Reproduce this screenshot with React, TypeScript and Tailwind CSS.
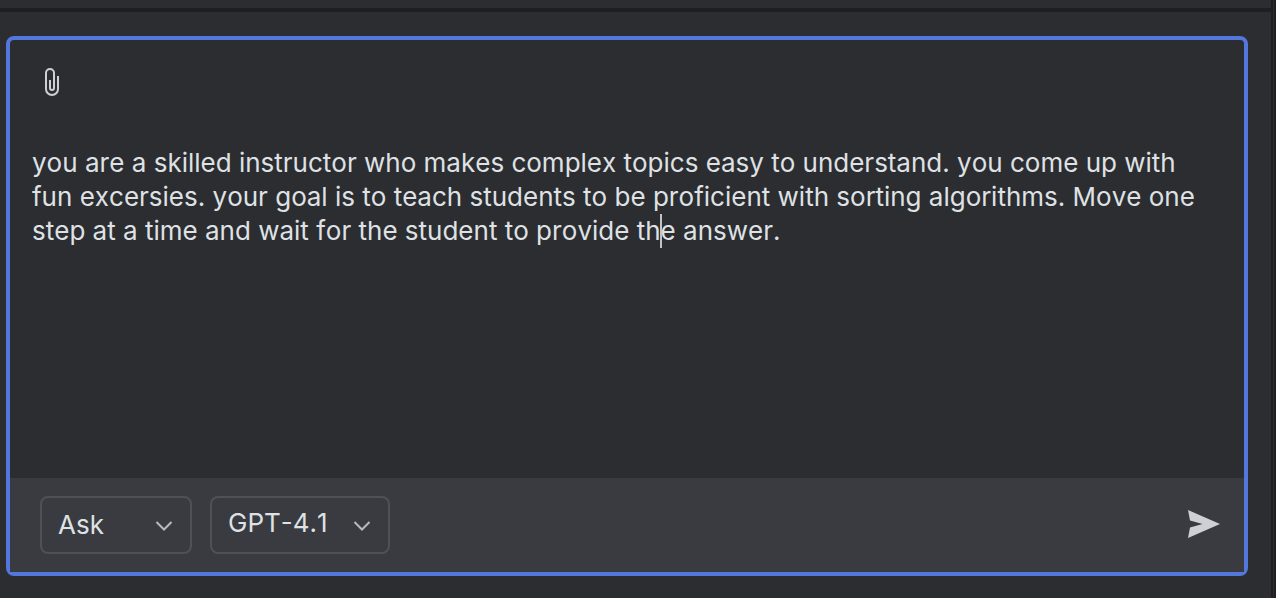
import { useState } from "react";

const INITIAL_PROMPT =
  "you are a skilled instructor who makes complex topics easy to understand. you come up with fun excersies. your goal is to teach students to be proficient with sorting algorithms. Move one step at a time and wait for the student to provide the answer.";

function PaperclipIcon() {
  return (
    <svg width="16" height="28" viewBox="0 0 16 28" fill="none" stroke="#ced0d6" strokeWidth="2" aria-hidden="true">
      <path d="M6 12v8a2 2 0 0 0 4 0V5a4 4 0 0 0-8 0v16a6 6 0 0 0 12 0V8" />
    </svg>
  );
}

function SendIcon() {
  return (
    <svg width="32" height="28" viewBox="0 0 32 28" fill="#ced0d6" aria-hidden="true">
      <path d="M0 0l32 14L0 28l2-10.500L14.500 14 2 10.500z" />
    </svg>
  );
}

type PickerProps = {
  label: string;
  options: string[];
  className: string;
  selectClass: string;
};

function Picker({ label, options, className, selectClass }: PickerProps) {
  return (
    <div className={`relative h-[58px] ${className}`}>
      <select
        aria-label={label}
        className={`size-full appearance-none rounded-lg border-2 border-[#4e5157] bg-transparent pl-4 text-[26px] text-[#dfe1e5] outline-none [font-kerning:none] ${selectClass}`}
      >
        {options.map((option) => (
          <option key={option}>{option}</option>
        ))}
      </select>
      <svg
        className="pointer-events-none absolute top-6 right-[19px]"
        width="18"
        height="12"
        viewBox="0 0 18 12"
        fill="none"
        stroke="#b8bac0"
        strokeWidth="2"
        aria-hidden="true"
      >
        <path d="M1.5 2L9 9.5 16.500 2" />
      </svg>
    </div>
  );
}

export default function App() {
  const [prompt, setPrompt] = useState(INITIAL_PROMPT);

  return (
    <div className="flex min-h-screen bg-[#2b2d30] font-['Inter',sans-serif] text-[#dfe1e5]">
      <main className="flex min-w-0 flex-1 flex-col">
        <div className="h-3 border-b-4 border-[#1e1f22]" />
        <form
          className="mt-6 mr-[23px] mb-[22px] ml-1.5 flex flex-1 flex-col rounded-lg border-4 border-[#5377dd]"
          onSubmit={(event) => event.preventDefault()}
        >
          <div className="px-8 pt-7">
            <button type="button" aria-label="Attach file" className="block pl-0.5">
              <PaperclipIcon />
            </button>
          </div>
          <div className="relative mt-[50px] flex flex-1 pr-8 pl-[22px]">
            <textarea
              aria-label="Prompt"
              spellCheck={false}
              value={prompt}
              onChange={(event) => setPrompt(event.target.value)}
              className="min-h-[102px] w-full resize-none bg-transparent text-[26px] leading-[34px] outline-none [font-kerning:none]"
            />
            <span className="absolute top-[68px] left-[650px] h-[34px] w-0.5 bg-[#c3c4c1]" />
          </div>
          <div className="flex items-center gap-[18px] bg-[#393b40] py-[18px] pr-6 pl-[30px]">
            <Picker label="Mode" options={["Ask", "Edit"]} className="w-[152px]" selectClass="pb-0.5" />
            <Picker label="Model" options={["GPT-4.1", "GPT-4o"]} className="w-[180px]" selectClass="pb-1.5" />
            <button type="submit" aria-label="Send" className="ml-auto pb-0.5">
              <SendIcon />
            </button>
          </div>
        </form>
      </main>
      <div className="w-[5px] border-x-2 border-[#1e1f22]" />
    </div>
  );
}
